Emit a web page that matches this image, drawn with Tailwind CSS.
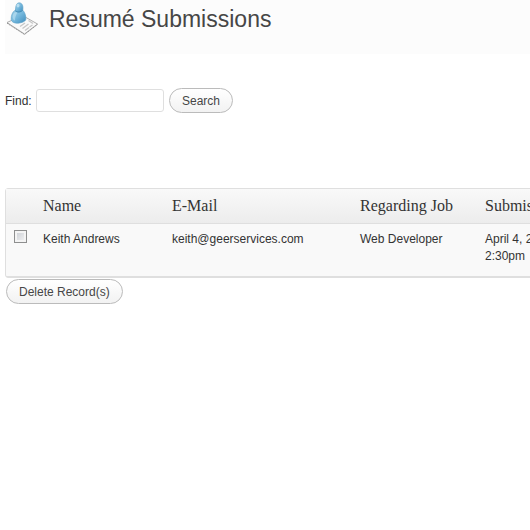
<!DOCTYPE html>
<html lang="en">
<head>
<meta charset="utf-8">
<title>Resumé Submissions</title>
<script src="https://cdn.jsdelivr.net/npm/@tailwindcss/browser@4"></script>
</head>
<body class="min-h-screen overflow-x-hidden bg-white pl-[5px] font-['Liberation_Sans',Arial,sans-serif] text-xs text-[#333]">
<header class="flex h-[54px] items-start bg-[#fcfcfc]">
  <svg class="mt-[2px] h-[34px] w-[34px] shrink-0" viewBox="0 0 34 34" aria-hidden="true">
    <defs>
      <linearGradient id="skin" x1="0" y1="0" x2="1" y2="1">
        <stop offset="0" stop-color="#a6d5ec"/><stop offset=".5" stop-color="#74b7dc"/><stop offset="1" stop-color="#3f8dbd"/>
      </linearGradient>
    </defs>
    <path d="M2 20.500 17.500 13.500 32.500 22 19.500 32Z" fill="#fafafa" stroke="#999" stroke-width=".8"/>
    <path d="M2 21.200 19.500 32.500 32.500 22.500" fill="none" stroke="#808080" stroke-width=".7" stroke-dasharray="1.500 .6"/>
    <path d="M15 24.500l5-3.500M17.500 26.500l6-4.500M20 28.500l4-3M24.500 25l3-2M23.500 18.500l4.500 3" stroke="#c8c8c8" stroke-width="1.400"/>
    <path d="M10.500 8C7.500 9.500 6 13.500 6.200 17.500c.2 3 4.500 4.200 8.300 3.500 3.500-.6 6.300-2 6.400-4C21 13 19.500 9.500 17 7.500Z" fill="url(#skin)" stroke="#5b9fc6" stroke-width=".6"/>
    <path d="M8 13c1-2.500 3-3.500 4.500-2.500-1.500 2-2.500 5-2.500 8-1.800-.3-2.800-2.500-2-5.500Z" fill="#c5e5f4" opacity=".55"/>
    <path d="M10.500 8.500c0-4.500 1-7.700 3.700-7.700 2.800 0 4.300 3 3.600 7-1.500 2.200-5.500 2.700-7.300.7Z" fill="url(#skin)" stroke="#5b9fc6" stroke-width=".6"/>
    <ellipse cx="13" cy="3.600" rx="1.500" ry="1.900" fill="#cce9f6" opacity=".7"/>
    <path d="M10.300 9c1.800 1.700 5.700 1.300 7.400-.7" fill="none" stroke="#3782ae" stroke-width=".8"/>
  </svg>
  <h1 class="ml-[10px] mt-1 text-[23px] leading-[30px] whitespace-nowrap text-[#464646]">Resumé Submissions</h1>
</header>
<main>
  <form class="mt-[34px] flex items-center">
    <label for="find" class="w-[31px]">Find:</label>
    <input id="find" type="text" class="h-[23px] w-32 rounded-[3px] border border-[#dfdfdf] bg-white px-1 outline-none">
    <button type="button" class="ml-[5px] h-[25px] rounded-full border border-[#bbb] bg-linear-to-b from-white to-[#f2f2f2] px-3 leading-4 text-[#464646]">Search</button>
  </form>
  <table class="mt-[75px] w-full min-w-[640px] table-fixed border-separate border-spacing-0 rounded-[3px] border border-[#dfdfdf] bg-[#f9f9f9] text-left">
    <colgroup><col class="w-[30px]"><col class="w-[129px]"><col class="w-[188px]"><col class="w-[125px]"><col></colgroup>
    <thead class="font-['Liberation_Serif',Georgia,serif] text-base leading-5">
      <tr class="bg-linear-to-b from-[#f9f9f9] to-[#ececec]">
        <td class="h-[35px] border-b border-[#dfdfdf]"></td>
        <th scope="col" class="border-b border-[#dfdfdf] px-[7px] font-normal">Name</th>
        <th scope="col" class="border-b border-[#dfdfdf] px-[7px] font-normal">E-Mail</th>
        <th scope="col" class="border-b border-[#dfdfdf] px-[7px] font-normal">Regarding Job</th>
        <th scope="col" class="border-b border-[#dfdfdf] px-[7px] font-normal">Submission Date</th>
      </tr>
    </thead>
    <tbody class="align-top leading-[17px]">
      <tr>
        <td class="h-[53px] border-b border-[#dfdfdf] pl-2 pt-[6px]"><input type="checkbox" aria-label="Select Keith Andrews" class="block size-[13px] appearance-none border border-[#8e8f8f] bg-linear-to-br from-[#c8ccd2] to-[#f6f6f6] shadow-[inset_0_0_0_2px_#f4f4f4]"></td>
        <td class="border-b border-[#dfdfdf] px-[7px] pt-[7px]">Keith Andrews</td>
        <td class="border-b border-[#dfdfdf] px-[7px] pt-[7px]">keith@geerservices.com</td>
        <td class="border-b border-[#dfdfdf] px-[7px] pt-[7px]">Web Developer</td>
        <td class="border-b border-[#dfdfdf] px-[7px] pt-[7px]">April 4, 2012<br>2:30pm</td>
      </tr>
    </tbody>
  </table>
  <button type="button" class="ml-px mt-px h-[25px] rounded-full border border-[#bbb] bg-linear-to-b from-white to-[#f2f2f2] px-3 leading-4 text-[#464646]">Delete Record(s)</button>
</main>
</body>
</html>
